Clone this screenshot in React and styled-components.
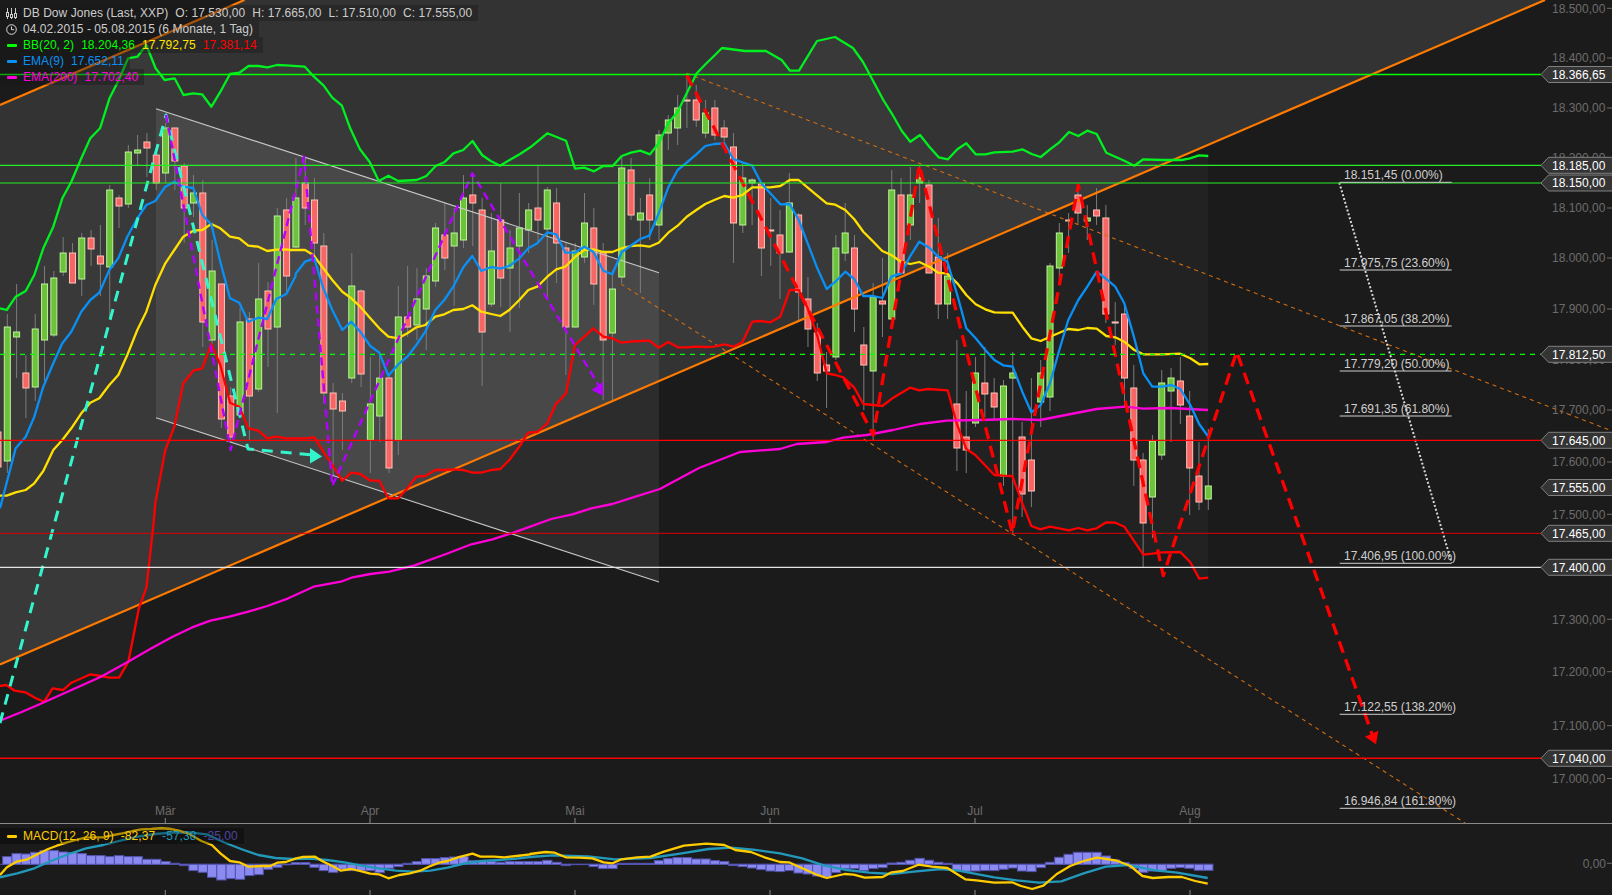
import React from "react";
import styled, { createGlobalStyle } from "styled-components";

const GlobalStyle = createGlobalStyle`
  html, body {
    margin: 0;
    padding: 0;
    background: #1c1b1b;
    overflow: hidden;
  }
`;

//candle x position
const candleX = (i) => 7.3 + 9.31 * i;
//helper: points read off a scaled view of the chart
const trace = (ox, oy, sx, sy, list) => list.map(([x, y]) => [ox + x / sx, oy + y / sy]);
const toPoints = (list) => list.map(([x, y]) => `${x.toFixed(1)},${y.toFixed(1)}`).join(" ");

//top, bottom, wick top, wick bottom, colour
const candles = [
  [432, 467, 432, 467, "r"], [327, 461, 314, 473, "g"], [332, 337, 284, 378, "g"], [373, 388, 355, 418, "r"],
  [329, 387, 314, 401, "g"], [284, 340, 266, 381, "g"], [278, 335, 271, 337, "g"], [253, 272, 237, 276, "g"],
  [253, 283, 243, 283, "r"], [238, 279, 233, 296, "g"], [238, 249, 230, 266, "r"], [256, 264, 225, 296, "r"],
  [190, 267, 185, 317, "g"], [198, 206, 195, 228, "r"], [152, 204, 145, 208, "g"], [150, 153, 135, 165, "g"],
  [142, 148, 133, 177, "r"], [155, 183, 148, 190, "r"], [128, 173, 123, 183, "g"], [128, 161, 128, 190, "r"],
  [166, 208, 163, 243, "r"], [193, 203, 175, 217, "g"], [193, 322, 180, 347, "r"], [271, 340, 240, 347, "g"],
  [284, 419, 284, 428, "r"], [396, 437, 387, 443, "r"], [322, 415, 308, 415, "g"], [319, 396, 312, 440, "r"],
  [299, 389, 263, 392, "g"], [291, 329, 282, 367, "r"], [216, 327, 208, 413, "g"], [210, 276, 198, 293, "r"],
  [198, 247, 158, 248, "g"], [183, 208, 157, 225, "r"], [200, 243, 178, 258, "r"], [246, 393, 233, 403, "r"],
  [393, 409, 383, 477, "r"], [401, 411, 393, 450, "r"], [286, 378, 253, 383, "g"], [291, 374, 289, 387, "r"],
  [404, 440, 357, 473, "g"], [378, 416, 353, 442, "g"], [378, 468, 375, 473, "r"], [317, 440, 286, 455, "g"],
  [317, 327, 266, 337, "r"], [299, 325, 268, 340, "g"], [276, 309, 268, 350, "g"], [228, 281, 223, 287, "g"],
  [235, 258, 203, 270, "r"], [233, 246, 208, 306, "g"], [198, 240, 175, 248, "g"], [195, 203, 173, 246, "r"],
  [210, 332, 198, 386, "r"], [251, 304, 213, 307, "g"], [220, 278, 183, 307, "r"], [248, 268, 230, 332, "g"],
  [228, 246, 193, 308, "g"], [210, 230, 203, 253, "g"], [208, 220, 165, 243, "r"], [190, 229, 187, 300, "g"],
  [203, 243, 188, 283, "r"], [248, 327, 243, 375, "r"], [251, 327, 243, 327, "g"], [223, 257, 193, 263, "g"],
  [228, 284, 208, 305, "r"], [252, 340, 243, 400, "r"], [289, 333, 270, 400, "g"], [168, 277, 157, 283, "g"],
  [170, 215, 158, 220, "r"], [213, 220, 198, 293, "g"], [195, 220, 178, 240, "r"], [135, 225, 130, 240, "g"],
  [120, 133, 115, 150, "g"], [108, 128, 95, 145, "g"], [100, 101, 73, 128, "r"], [100, 120, 85, 127, "r"],
  [113, 133, 100, 138, "g"], [108, 135, 100, 140, "r"], [128, 137, 120, 143, "r"], [147, 223, 133, 263, "r"],
  [178, 225, 163, 233, "g"], [180, 183, 178, 225, "g"], [184, 248, 182, 276, "r"], [230, 231, 198, 266, "r"],
  [235, 253, 210, 299, "r"], [203, 252, 173, 253, "g"], [215, 292, 213, 320, "r"], [299, 329, 277, 347, "r"],
  [333, 373, 323, 381, "r"], [365, 371, 352, 408, "r"], [248, 357, 235, 360, "g"], [233, 253, 203, 261, "g"],
  [248, 309, 235, 332, "r"], [345, 365, 327, 410, "r"], [297, 371, 283, 440, "g"], [301, 304, 258, 337, "r"],
  [190, 319, 170, 320, "g"], [195, 273, 178, 273, "r"], [195, 225, 167, 240, "g"], [178, 183, 165, 203, "g"],
  [185, 273, 180, 273, "r"], [257, 304, 218, 319, "r"], [276, 304, 253, 319, "g"], [404, 448, 340, 471, "r"],
  [437, 450, 391, 473, "r"], [373, 423, 357, 427, "g"], [383, 394, 347, 417, "r"], [393, 407, 378, 420, "r"],
  [386, 476, 380, 486, "g"], [373, 378, 352, 533, "g"], [437, 494, 422, 517, "r"], [460, 491, 378, 507, "r"],
  [373, 402, 360, 427, "g"], [266, 397, 263, 411, "g"], [233, 268, 223, 280, "g"], [220, 221, 213, 253, "r"],
  [195, 213, 185, 224, "r"], [218, 221, 205, 240, "g"], [210, 216, 188, 225, "r"], [218, 314, 205, 323, "r"],
  [322, 323, 302, 345, "r"], [314, 378, 302, 407, "r"], [388, 460, 365, 486, "r"], [460, 523, 453, 567, "r"],
  [441, 497, 435, 538, "g"], [383, 455, 370, 460, "g"], [378, 391, 368, 442, "g"], [381, 405, 357, 424, "r"],
  [416, 468, 391, 515, "r"], [476, 502, 442, 510, "r"], [486, 499, 429, 510, "g"],
];

const bbUpper = [
  ...trace(0, 120, 3, 3, [[0, 565], [20, 570], [47, 530], [77, 513], [103, 465], [130, 385], [160, 320], [187, 235], [214, 185], [244, 115], [271, 55], [300, 25]]),
  ...trace(0, 0, 2.904, 3, [[318, 295], [345, 240], [372, 175], [399, 170], [425, 135], [452, 205], [478, 240], [507, 235], [533, 285], [561, 280], [587, 283], [614, 320], [640, 275], [668, 222], [695, 218], [722, 198], [750, 198], [777, 202], [804, 195], [830, 196], [885, 200], [912, 230], [940, 257], [965, 293], [993, 317], [1017, 385], [1045, 447], [1073, 485], [1100, 543], [1128, 527], [1156, 543], [1210, 540], [1238, 528], [1265, 498], [1290, 487], [1317, 460], [1345, 450], [1372, 423], [1400, 465], [1425, 483], [1452, 497], [1480, 480], [1510, 462], [1540, 442]]),
  ...trace(540, 60, 3, 3, [[22, 220], [78, 242], [105, 326], [133, 323], [162, 334], [190, 318], [218, 318], [245, 288], [273, 278], [301, 272], [330, 283], [356, 250], [385, 190], [413, 155], [440, 100], [470, 40], [497, 12]]),
  [715, 55], [722, 48], [745, 51], [766, 51], [781.7, 60], [790, 70.7], [799, 70.7], [817, 41], [835, 37], [853, 48], [863, 62],
  ...trace(540, 60, 3, 3, [[995, 55], [1030, 120], [1055, 160], [1085, 212], [1111, 245], [1140, 225], [1168, 260], [1196, 292], [1224, 298], [1252, 268], [1279, 250], [1307, 283], [1336, 283], [1363, 277], [1418, 275]]),
  ...trace(1000, 130, 3, 3, [[67, 58], [95, 72], [122, 81], [150, 58], [178, 37], [207, 6], [235, 18], [262, 2], [290, 12], [319, 68], [346, 80], [373, 92], [403, 107], [430, 88], [490, 90], [545, 90], [570, 85], [597, 76], [625, 78]]),
];

const bbMid = [
  ...trace(0, 120, 3, 3, [[0, 1127], [20, 1127], [47, 1117], [77, 1110], [103, 1090], [130, 1053], [160, 990], [187, 960], [214, 925], [244, 880], [271, 848], [298, 835], [328, 795], [355, 765], [382, 705], [412, 630], [439, 575], [466, 495], [496, 430], [523, 390], [550, 350], [580, 332], [607, 330], [634, 312], [661, 325], [690, 350], [718, 355], [745, 377], [775, 380], [802, 393], [829, 389], [859, 388]]),
  ...trace(290, 130, 3, 3, [[0, 360], [45, 360], [70, 375], [100, 415], [127, 450], [157, 485], [184, 505], [211, 530], [241, 565], [268, 595], [295, 620], [325, 625], [352, 610], [379, 592], [406, 585], [436, 560], [463, 553], [490, 540], [520, 537], [547, 526], [574, 545], [604, 552], [631, 558], [658, 540], [688, 510], [715, 480], [742, 470], [772, 440], [799, 418], [826, 410]]),
  ...trace(540, 60, 3, 3, [[106, 590], [133, 570], [160, 568], [190, 576], [217, 576], [245, 565], [271, 558], [301, 556], [328, 560], [356, 548], [385, 518], [413, 497], [440, 470], [469, 450], [496, 432], [523, 420], [553, 408], [580, 413], [607, 405], [637, 382], [664, 382], [691, 382], [721, 378], [749, 360], [776, 360], [803, 383], [832, 407], [860, 430], [886, 434], [916, 450], [943, 478], [970, 515], [1000, 545], [1027, 573], [1054, 585], [1083, 605], [1111, 612], [1138, 606], [1168, 620], [1195, 638], [1222, 641], [1252, 670], [1279, 705], [1307, 733], [1336, 748], [1363, 757], [1390, 758], [1418, 758], [1447, 800], [1474, 835]]),
  ...trace(1000, 130, 3, 3, [[122, 633], [150, 620], [205, 597], [235, 600], [262, 594], [290, 596], [319, 618], [346, 622], [373, 635], [403, 660]]),
  ...trace(1000, 330, 3, 3, [[430, 73], [487, 73], [541, 71], [571, 85], [598, 103], [625, 102]]),
];

const ema9 = [
  ...trace(0, 120, 3, 3, [[0, 1165], [47, 985], [77, 950], [103, 890], [130, 800], [160, 730], [187, 670], [214, 635], [244, 575], [271, 540], [298, 518], [328, 450], [355, 415], [382, 350], [412, 295], [439, 255], [466, 243], [496, 200], [523, 185], [550, 200], [580, 204], [607, 285], [634, 313], [661, 425], [690, 535], [718, 548], [745, 605], [775, 593], [802, 597], [829, 537], [859, 522], [886, 470]]),
  ...trace(290, 130, 3, 3, [[18, 430], [45, 395], [73, 385], [100, 475], [127, 540], [157, 600], [184, 575], [211, 605], [241, 648], [268, 668], [295, 737], [325, 703], [352, 680], [379, 645], [406, 605], [436, 540], [463, 510], [490, 470], [520, 412], [547, 378], [574, 423], [604, 411], [631, 416], [658, 408], [688, 385], [715, 355], [742, 340], [772, 307], [799, 313], [826, 368]]),
  ...trace(540, 60, 3, 3, [[106, 577], [133, 560], [160, 575], [190, 632], [217, 643], [245, 577], [271, 558], [301, 537], [328, 527], [356, 460], [385, 382], [413, 330], [440, 308], [469, 283], [496, 258], [523, 252], [553, 250], [580, 297], [607, 307], [637, 317], [664, 370], [691, 400], [721, 433], [749, 432], [776, 480], [803, 550], [832, 625], [860, 687], [886, 665], [916, 635], [943, 657], [970, 708], [1000, 708], [1027, 714], [1054, 650], [1083, 640], [1111, 588], [1138, 545], [1168, 563], [1195, 590], [1222, 605], [1252, 705], [1279, 805], [1307, 835], [1336, 870], [1363, 900], [1390, 916], [1418, 920]]),
  ...trace(780, 300, 3, 3, [[727, 275], [754, 337], [782, 315], [810, 250]]),
  ...trace(1000, 130, 3, 3, [[178, 660], [205, 570], [235, 510], [262, 470], [290, 425], [319, 447], [346, 470], [373, 520], [403, 625]]),
  ...trace(1000, 330, 3, 3, [[430, 130], [457, 170], [487, 170], [514, 165], [541, 177], [571, 225], [598, 283], [625, 320]]),
];

const bbLow = [
  ...trace(0, 480, 2.376, 3, [[0, 618], [15, 615], [35, 632], [60, 637], [85, 655], [105, 665], [125, 625], [150, 630], [170, 608], [215, 583], [240, 588], [260, 593], [283, 593], [305, 545], [330, 385], [348, 322], [365, 130]]),
  ...trace(0, 120, 3, 3, [[466, 1150], [496, 990], [523, 920], [550, 790], [580, 752], [607, 745], [634, 672], [661, 735], [690, 848], [718, 860], [745, 925], [775, 932], [802, 955], [829, 950], [859, 955]]),
  ...trace(290, 130, 3, 3, [[0, 925], [45, 925], [73, 922], [100, 965], [127, 1005], [157, 1052], [184, 1028], [211, 1032], [241, 1052], [268, 1052], [295, 1105], [325, 1105], [352, 1075], [379, 1040], [406, 1038], [436, 1020], [463, 1020], [490, 1018], [520, 1020], [547, 1028], [574, 1028], [604, 1020], [631, 1017], [658, 990], [688, 950], [715, 908], [742, 906], [772, 880], [799, 820]]),
  ...trace(540, 60, 3, 3, [[60, 1020], [78, 1000], [105, 855], [133, 830], [160, 805], [190, 830], [217, 835], [245, 848], [271, 845], [301, 843], [328, 842], [356, 863], [385, 846], [413, 862], [440, 862], [469, 860], [496, 861], [523, 860], [553, 853], [580, 860], [607, 847], [637, 785], [664, 783], [691, 787], [721, 770], [749, 690], [776, 690], [803, 745], [832, 828], [860, 940], [886, 945]]),
  ...trace(780, 300, 3, 3, [[190, 232], [222, 262], [250, 312], [280, 315], [307, 318], [340, 293], [390, 263], [418, 271], [445, 267], [503, 271], [530, 370], [559, 447], [586, 465], [643, 525], [670, 527], [697, 528]]),
  ...trace(1000, 330, 3, 3, [[67, 520], [94, 588], [121, 598], [150, 590], [207, 601], [235, 594], [262, 601], [290, 595], [319, 577], [346, 578], [373, 590], [430, 674], [457, 671], [487, 667], [541, 666], [571, 697], [598, 746], [625, 743]]),
];

const ema200 = [
  ...trace(0, 480, 2.376, 3, [[0, 722], [50, 697], [90, 675], [170, 630], [240, 590], [300, 548], [360, 505], [410, 470], [455, 443], [500, 422], [545, 410], [590, 395], [635, 378], [685, 355], [745, 320], [810, 305], [835, 293], [880, 282], [925, 275], [985, 256], [1060, 222], [1120, 193], [1170, 178], [1215, 160], [1260, 140], [1310, 117], [1360, 103], [1405, 85], [1455, 72], [1510, 50], [1568, 27]]),
  [699, 468], [740, 452], [780, 449], [796.7, 444], [826.7, 442], [843, 437.7], [866.7, 435], [893, 430], [920, 424],
  [946.7, 420.7], [980, 420], [1013, 419], [1040, 420], [1096.7, 409], [1125, 406.7], [1143, 408.7], [1170, 408], [1208, 410],
];

const cyanPath = [[0, 723], [166, 115], [248, 449], [312, 455]];
const purplePath = [[166, 115], [230.7, 450], [304, 156.7], [332.3, 486], [472.3, 173.3], [599, 386]];
const redPath = [[686.7, 75], [873.3, 435], [919.3, 165], [1012.3, 533], [1078.3, 185], [1163.3, 575.7], [1236.7, 351.7], [1372, 734]];

const macdLine = [
  ...trace(0, 780, 2.904, 3, [[0, 285], [20, 262], [48, 245], [80, 238], [110, 222], [140, 207], [165, 197], [195, 187], [220, 180], [247, 173], [275, 172], [300, 172], [330, 165], [355, 160], [385, 153], [410, 148], [440, 147], [470, 145], [495, 147], [520, 152], [550, 162], [585, 183], [615, 195], [640, 220], [668, 243], [695, 247], [722, 260], [760, 258], [785, 258], [805, 248], [830, 246], [860, 235], [880, 231], [915, 230], [935, 243], [965, 258], [990, 272], [1020, 267], [1050, 274], [1075, 281], [1100, 283], [1128, 295], [1160, 285], [1190, 280], [1220, 272], [1245, 260], [1275, 248], [1300, 243], [1330, 232], [1372, 221], [1395, 230], [1435, 230], [1465, 232], [1500, 228], [1540, 223]]),
  ...trace(530, 800, 2.24, 3, [[0, 162], [35, 156], [55, 158], [80, 172], [110, 173], [140, 175], [165, 187], [185, 190], [205, 178], [240, 172], [270, 170], [300, 155], [345, 137], [395, 131], [435, 135], [460, 150], [495, 156], [525, 172], [560, 186], [580, 187], [610, 205], [640, 223], [665, 234], [705, 222], [725, 224], [750, 233], [790, 231], [810, 217], [835, 213], [870, 194], [900, 200], [935, 204], [975, 238], [1000, 241], [1040, 248], [1080, 247], [1100, 258], [1125, 267], [1150, 257], [1180, 222], [1210, 198], [1240, 183], [1270, 173], [1315, 182], [1345, 198], [1372, 228], [1395, 234], [1430, 231], [1460, 231], [1490, 243], [1518, 251]]),
];

const macdSignal = [
  ...trace(0, 780, 2.904, 3, [[0, 292], [50, 280], [100, 265], [150, 242], [200, 222], [250, 205], [300, 195], [350, 182], [400, 170], [450, 162], [500, 158], [550, 157], [600, 163], [650, 187], [700, 207], [750, 225], [800, 234], [850, 237], [900, 236], [950, 240], [1000, 247], [1050, 257], [1100, 265], [1150, 272], [1200, 275], [1250, 272], [1300, 263], [1350, 250], [1400, 243], [1450, 240], [1500, 236]]),
  ...trace(530, 800, 2.24, 3, [[0, 171], [50, 166], [130, 169], [190, 178], [270, 174], [340, 160], [400, 147], [450, 143], [500, 149], [560, 160], [610, 175], [660, 197], [710, 210], [760, 218], [810, 222], [860, 215], [920, 207], [960, 212], [1040, 232], [1090, 241], [1140, 248], [1190, 244], [1240, 220], [1290, 200], [1340, 195], [1400, 211], [1450, 218], [1518, 234]]),
];

const histogram = [
  7.7, 10.7, 10.3, 12, 13.7, 13.7, 12.3, 11.7, 10.7, 8.7, 8.7, 7.7, 8.7, 7.7, 7.7, 5, 5, 2.7, 1, -1.3, -6.3, -8, -13, -15.7, -14.3, -15,
  -11.3, -10.3, -5, -3, -0.5, 1.7, 1.7, -3, -6.3, -8, -5, -6.3, -6.3, -6.3, -8.3, -4, -2.3, 1, 2.7, 5.7, 5.7, 6.7, 7.3, 8, 3.7, 3.7, 3, 2,
  2.7, 2.7, 2.7, 2.7, 4, 2, -1.3, -0.3, -0.3, -2.3, -4.3, -4.3, 1, 1, 1, 1, 3.7, 5.7, 6.7, 6.7, 5.3, 5.3, 3.7, 2.7, -1.3, -2.3, -3.7, -5.3,
  -6.7, -7.3, -6.3, -8.7, -9.7, -11.7, -13, -8.3, -4.3, -4.3, -6.3, -4.3, -3.3, 1.3, 2, 4, 6, 4, 2, 1, -6.3, -7, -6.7, -6.3, -6.3, -5, -3.7,
  -6.7, -7.3, -3.3, 2, 7, 10, 12, 12, 12, 8.3, 4.3, 1.7, -4, -8, -6.7, -6.3, -4, -3.3, -4, -6, -6,
];

const priceTicks = [
  ["18.500,00", 8.3], ["18.400,00", 58], ["18.300,00", 108], ["18.200,00", 158], ["18.100,00", 208], ["18.000,00", 258],
  ["17.900,00", 309], ["17.800,00", 360], ["17.700,00", 410], ["17.600,00", 462], ["17.500,00", 514.3], ["17.300,00", 619.3],
  ["17.200,00", 671.7], ["17.100,00", 725.7], ["17.000,00", 778.5],
];
const priceTags = [
  ["18.366,65", 74.5], ["18.185,00", 165.3], ["18.150,00", 183], ["17.812,50", 354.3], ["17.645,00", 440.3],
  ["17.555,00", 487.5], ["17.465,00", 533.3], ["17.400,00", 567.3], ["17.040,00", 758.3],
];
const fibLevels = [
  ["18.151,45 (0.00%)", 182.3], ["17.975,75 (23.60%)", 270], ["17.867,05 (38.20%)", 326], ["17.779,20 (50.00%)", 371],
  ["17.691,35 (61.80%)", 416], ["17.406,95 (100.00%)", 563.3], ["17.122,55 (138.20%)", 714.3], ["16.946,84 (161.80%)", 808.3],
];
const months = [["Mär", 165.3], ["Apr", 370], ["Mai", 575], ["Jun", 770], ["Jul", 975], ["Aug", 1190]];
const hLines = [
  { y: 74.5, color: "#00ff00", w: 1.5 },
  { y: 165.3, color: "#22f022", w: 1.2 },
  { y: 183, color: "#22f022", w: 1.2 },
  { y: 354.3, color: "#00ff00", w: 1.2, dash: "5 5" },
  { y: 440.3, color: "#ff0000", w: 1.3 },
  { y: 533.3, color: "#e00000", w: 1 },
  { y: 567.3, color: "#e4e4e4", w: 1.2 },
  { y: 758.3, color: "#ff0000", w: 1.5 },
];

const Page = styled.div`
  display: flex;
  flex-direction: column;
  width: 1612px;
  height: 895px;
  background: #1c1b1b;
  font-family: "Liberation Sans", Arial, sans-serif;
`;
const PricePanel = styled.div`
  position: relative;
  height: 823px;
`;
const MacdPanel = styled.div`
  position: relative;
  flex: 1;
  border-top: 1px solid #8a8a8a;
`;
const ChartSvg = styled.svg`
  display: block;
  width: 1612px;
  height: ${(p) => p.$h}px;
`;
const Trace = styled.polyline`
  fill: none;
  stroke: ${(p) => p.$color};
  stroke-width: ${(p) => p.$w || 2.3};
  stroke-dasharray: ${(p) => p.$dash || "none"};
  stroke-linejoin: round;
`;
const Wick = styled.line`
  stroke: #7c7c7c;
  stroke-width: 1;
`;
const Body = styled.rect`
  fill: ${(p) => (p.$up ? "#6cc23a" : "#f76565")};
  stroke: ${(p) => (p.$up ? "#bdf39a" : "#ffc4b8")};
  stroke-width: 1;
`;
const Bar = styled.rect`
  fill: #8a8af0;
  stroke: #5252ae;
  stroke-width: 1;
`;
const SvgText = styled.text`
  font-family: "Liberation Sans", Arial, sans-serif;
  font-size: 12px;
`;
const AxisText = styled(SvgText)`
  fill: #6c6c6c;
`;
const FibText = styled(SvgText)`
  fill: #cfcfcf;
`;
const TagText = styled(SvgText)`
  fill: #ffffff;
`;
const TagShape = styled.path`
  fill: #343434;
  stroke: #808080;
  stroke-width: 1;
`;
const Legend = styled.div`
  position: absolute;
  top: 5px;
  left: 0;
  display: flex;
  flex-direction: column;
  align-items: flex-start;
`;
const MacdLegend = styled(Legend)`
  top: 4px;
`;
const LegendRow = styled.div`
  display: flex;
  align-items: center;
  gap: 7px;
  height: 16px;
  padding: 0 6px;
  background: ${(p) => (p.$dark ? "rgba(0, 0, 0, 0.3)" : "rgba(24, 24, 24, 0.38)")};
  font-size: 12px;
  letter-spacing: 0.05px;
  white-space: nowrap;
`;
const IconSlot = styled.span`
  display: flex;
  align-items: center;
  justify-content: center;
  width: 11px;
  margin-right: -1px;
`;
const Swatch = styled.span`
  width: 10px;
  height: 3px;
  border-radius: 1px;
  background: ${(p) => p.$color};
`;
const Value = styled.span`
  color: ${(p) => p.$color || "#cccccc"};
`;

const CandleIcon = () => (
  <svg width="11" height="11" viewBox="0 0 11 11" fill="none" stroke="#cccccc" strokeWidth="1">
    <path d="M1.5 0v11M5.5 0v11M9.5 0v11" />
    <rect x="0.5" y="4.5" width="2" height="4" fill="#1c1b1b" />
    <rect x="4.5" y="6.5" width="2" height="3" fill="#1c1b1b" />
    <rect x="8.5" y="5.5" width="2" height="4" fill="#1c1b1b" />
  </svg>
);
const ClockIcon = () => (
  <svg width="11" height="11" viewBox="0 0 11 11" fill="none" stroke="#dddddd" strokeWidth="1">
    <circle cx="5.5" cy="5.5" r="4.8" />
    <path d="M5.5 2.5v3.2h2.6" />
  </svg>
);

const Candles = () =>
  candles.map(([top, bottom, wickTop, wickBottom, dir], i) => {
    const x = candleX(i - 1);
    return (
      <g key={i}>
        <Wick x1={x} x2={x} y1={wickTop} y2={wickBottom} />
        <Body x={x - 3} y={top} width={6} height={Math.max(bottom - top, 1)} $up={dir === "g"} />
      </g>
    );
  });

const PriceTag = ({ label, y }) => (
  <g>
    <TagShape d={`M1612 ${y - 8}H1548.5L1541 ${y}L1548.5 ${y + 8}H1612`} />
    <TagText x="1552" y={y + 4.3}>{label}</TagText>
  </g>
);

const App = () => {
  const bandFill = toPoints([...bbUpper, ...[...bbLow].reverse()]);
  return (
    <Page>
      <GlobalStyle />
      <PricePanel>
        <ChartSvg $h={823} viewBox="0 0 1612 823">
          <polygon points="0,105 244.5,0 1545,0 0,664.5" fill="#333333" />
          <polygon points={bandFill} fill="rgba(255,255,255,0.033)" />
          <polygon points="156,108.7 659,272.7 659,582 156,417.7" fill="rgba(255,255,255,0.08)" />
          <Candles />
          <Trace points="156,108.7 659,272.7" $color="#c8c8c8" $w={1.1} />
          <Trace points="156,417.7 659,582" $color="#c8c8c8" $w={1.1} />
          <Trace points="686.7,73.3 1612,431" $color="#d06c10" $w={1.1} $dash="4 4" />
          <Trace points="621,284 1465,823" $color="#d06c10" $w={1.1} $dash="4 4" />
          <Trace points="0,105 244.5,0" $color="#ff7a00" $w={2.2} />
          <Trace points="0,664.5 1545,0" $color="#ff7a00" $w={2.2} />
          <Trace points={toPoints(bbUpper)} $color="#00f020" />
          <Trace points={toPoints(bbLow)} $color="#ff0000" />
          <Trace points={toPoints(bbMid)} $color="#ffe000" />
          <Trace points={toPoints(ema200)} $color="#ff00d8" />
          <Trace points={toPoints(ema9)} $color="#0a90f5" />
          <Trace points={toPoints(cyanPath)} $color="#33f5cc" $w={3} $dash="11 8" />
          <polygon points="310,448 322,456.5 310,463.5" fill="#33f5cc" />
          <Trace points={toPoints(purplePath)} $color="#b400ff" $w={2.4} $dash="8 5" />
          <polygon points="603,395.7 591.7,390 603,381.7" fill="#b400ff" />
          <Trace points={toPoints(redPath)} $color="#ff0000" $w={3.3} $dash="12 7" />
          <polygon points="1365,736.7 1378.3,730.7 1376,744.3" fill="#ff0000" />
          <Trace points="1339.3,182.7 1451.7,563" $color="#d8d8d8" $w={2} $dash="2 2" />
          {hLines.map((l) => (
            <line key={l.y} x1="0" x2="1541" y1={l.y} y2={l.y} stroke={l.color} strokeWidth={l.w} strokeDasharray={l.dash} />
          ))}
          {fibLevels.map(([label, y]) => (
            <g key={label}>
              <line x1="1339.7" x2="1451.7" y1={y} y2={y} stroke="#cfcfcf" strokeWidth="1" />
              <FibText x="1344" y={y - 3}>{label}</FibText>
            </g>
          ))}
          {priceTicks.map(([label, y]) => (
            <g key={label}>
              <AxisText x="1552" y={y + 4.3}>{label}</AxisText>
              <line x1="1607" x2="1612" y1={y} y2={y} stroke="#6c6c6c" />
            </g>
          ))}
          {priceTags.map(([label, y]) => (
            <PriceTag key={label} label={label} y={y} />
          ))}
          {months.map(([label, x]) => (
            <g key={label}>
              <AxisText x={x} y="815" textAnchor="middle">{label}</AxisText>
              <line x1={x} x2={x} y1="818" y2="823" stroke="#8a8a8a" />
            </g>
          ))}
        </ChartSvg>
        <Legend>
          <LegendRow>
            <IconSlot><CandleIcon /></IconSlot>
            <Value>DB Dow Jones (Last, XXP)</Value>
            <Value>O: 17.530,00</Value>
            <Value>H: 17.665,00</Value>
            <Value>L: 17.510,00</Value>
            <Value>C: 17.555,00</Value>
          </LegendRow>
          <LegendRow>
            <IconSlot><ClockIcon /></IconSlot>
            <Value>04.02.2015 - 05.08.2015 (6 Monate, 1 Tag)</Value>
          </LegendRow>
          <LegendRow>
            <IconSlot><Swatch $color="#00ff00" /></IconSlot>
            <Value $color="#00ff00">BB(20, 2)</Value>
            <Value $color="#00ff00">18.204,36</Value>
            <Value $color="#ffe600">17.792,75</Value>
            <Value $color="#ff0000">17.381,14</Value>
          </LegendRow>
          <LegendRow>
            <IconSlot><Swatch $color="#0a90f5" /></IconSlot>
            <Value $color="#0a90f5">EMA(9)</Value>
            <Value $color="#0a90f5">17.652,11</Value>
          </LegendRow>
          <LegendRow>
            <IconSlot><Swatch $color="#ff00dd" /></IconSlot>
            <Value $color="#ff00dd">EMA(200)</Value>
            <Value $color="#ff00dd">17.702,40</Value>
          </LegendRow>
        </Legend>
      </PricePanel>
      <MacdPanel>
        <ChartSvg $h={71} viewBox="0 824 1612 71">
          <line x1="0" x2="1213" y1="864.3" y2="864.3" stroke="#5252ae" />
          {histogram.map((v, i) => (
            <Bar key={i} x={candleX(i) - 4.65} y={v > 0 ? 864.3 - v : 864.3} width={9.31} height={Math.abs(v)} />
          ))}
          <Trace points={toPoints(macdSignal)} $color="#2299bb" />
          <Trace points={toPoints(macdLine)} $color="#ffcc00" />
          {months.map(([label, x]) => (
            <line key={label} x1={x} x2={x} y1="890" y2="895" stroke="#8a8a8a" />
          ))}
          <AxisText x="1582.7" y="867.6">0,00</AxisText>
          <line x1="1607" x2="1612" y1="863.3" y2="863.3" stroke="#6c6c6c" />
        </ChartSvg>
        <MacdLegend>
          <LegendRow $dark>
            <IconSlot><Swatch $color="#ffcc00" /></IconSlot>
            <Value $color="#ffcc00">MACD(12, 26, 9)</Value>
            <Value $color="#ffcc00">-82,37</Value>
            <Value $color="#2299bb">-57,38</Value>
            <Value $color="#4b46a0">-25,00</Value>
          </LegendRow>
        </MacdLegend>
      </MacdPanel>
    </Page>
  );
};

export default App;
